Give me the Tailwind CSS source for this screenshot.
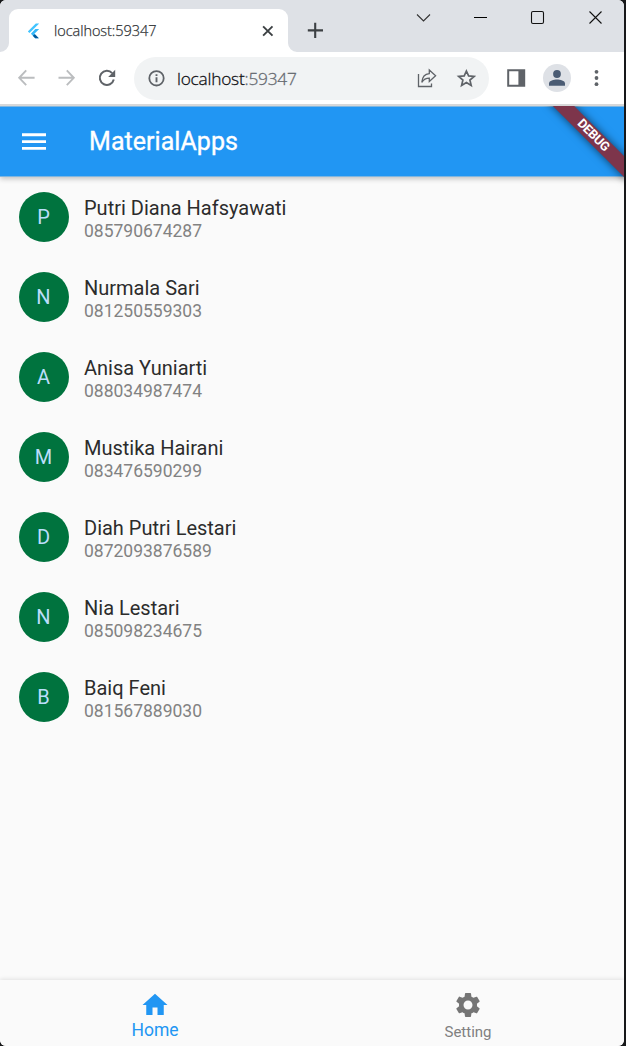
<!DOCTYPE html>
<html lang="en">
<head>
<meta charset="utf-8">
<title>localhost:59347</title>
<script src="https://cdn.jsdelivr.net/npm/@tailwindcss/browser@4"></script>
</head>
<body class="bg-[#17181a] font-['Roboto',sans-serif]">
<div class="flex h-[1046px] w-[624px] flex-col overflow-hidden rounded-[6px] bg-[#fafafa]">
  <!-- Tab strip -->
  <div class="flex h-[52px] shrink-0 items-start bg-[#dee1e6]">
    <div class="relative ml-[9px] mt-[9px] flex h-[43px] w-[279px] items-center rounded-t-[9px] bg-white font-['Open_Sans',sans-serif]">
      <svg class="absolute -left-[9px] bottom-0" width="9" height="9"><path d="M9 0A9 9 0 0 1 0 9H9Z" fill="#fff"/></svg>
      <svg class="absolute -right-[9px] bottom-0" width="9" height="9"><path d="M0 0A9 9 0 0 0 9 9H0Z" fill="#fff"/></svg>
      <svg class="ml-[16px]" width="20" height="20" viewBox="0 0 20 20"><path d="M2.8 10.4 10.8 2.4H14.2L4.5 12.1Z" fill="#40c4ff"/><path d="M10.3 8H14.2L9.4 12.8 13.8 17.2H10.2L5.9 12.8Z" fill="#35b8fa"/><path d="M7.8 14.8 9.9 13.2 13.8 17.2H10.2Z" fill="#01579b"/></svg>
      <span class="ml-[9px] w-[200px] text-[14.5px] font-light tracking-[-0.05px] text-[#303336] [-webkit-text-stroke:0.25px]">localhost:59347</span>
      <svg class="ml-[7px]" width="14" height="14" viewBox="0 0 14 14"><path d="M2.1 2.3 11.5 11.7M11.5 2.3 2.1 11.7" stroke="#3c4043" stroke-width="1.9"/></svg>
    </div>
    <svg class="ml-[19px] mt-[22px]" width="16" height="16" viewBox="0 0 16 16"><path d="M8.2 .8V16M.8 8.4H16" stroke="#3c4043" stroke-width="2.1"/></svg>
    <svg class="ml-[92px] mt-[12px]" width="16" height="12" viewBox="0 0 16 12"><path d="M2 2.5 8.5 9 15 2.5" fill="none" stroke="#333" stroke-width="1.1"/></svg>
    <svg class="ml-[43px] mt-[12px]" width="14" height="12"><path d="M0 5.5H13" stroke="#000"/></svg>
    <svg class="ml-[42px] mt-[10px]" width="15" height="15"><rect x="1.5" y="1.5" width="12" height="12" rx="1.5" fill="none" stroke="#111" stroke-width="1.1"/></svg>
    <svg class="ml-[43px] mt-[10px]" width="15" height="15"><path d="M1.5 1.5 13.5 13.5M13.5 1.5 1.5 13.5" stroke="#111" stroke-width="1.1"/></svg>
  </div>

  <!-- Toolbar -->
  <div class="flex h-[52px] shrink-0 items-center bg-white">
    <svg class="ml-[17px]" width="20" height="20" viewBox="0 0 20 20"><path d="M17.6 9.8H2.4M9.2 2.4 2.2 9.8 9.2 17.2" fill="none" stroke="#bbbdbf" stroke-width="1.9"/></svg>
    <svg class="ml-[20px]" width="20" height="20" viewBox="0 0 20 20"><path d="M1.5 9.8H16.6M9.8 2.4 16.8 9.8 9.8 17.2" fill="none" stroke="#bbbdbf" stroke-width="1.9"/></svg>
    <svg class="ml-[20px]" width="20" height="20" viewBox="0 0 20 20"><path d="M16.8 11.6A7.1 7.1 0 1 1 15.2 5.1" fill="none" stroke="#5f6368" stroke-width="2"/><path d="M18.2 1.8V9H11.2Z" fill="#5f6368"/></svg>
    <div class="ml-[17px] flex h-[43px] w-[355px] items-center rounded-full bg-[#f1f3f4] font-['Open_Sans',sans-serif]">
      <svg class="ml-[14px]" width="18" height="18" viewBox="0 0 18 18"><circle cx="8.5" cy="9.3" r="7.2" fill="none" stroke="#5f6368" stroke-width="1.8"/><path d="M8.5 8.3V13.2M8.5 5.2V7" stroke="#5f6368" stroke-width="1.9"/></svg>
      <span class="ml-[11px] mt-[1px] w-[239px] text-[17.3px] font-light tracking-[-0.22px] text-[#111216] [-webkit-text-stroke:0.3px]">localhost<span class="text-[#666a70]">:59347</span></span>
      <svg width="22" height="22" viewBox="0 0 22 22" fill="none" stroke="#5f6368" stroke-width="1.3"><path d="M2.5 7V19.5H15.5V16.5"/><path d="M13.3 3V6.6C8.4 7 6.2 10.5 5.8 15.3 7.6 12.4 9.8 11.2 13.3 11.2V14.6L19.6 8.8Z"/></svg>
      <svg class="ml-[18px]" width="20" height="20" viewBox="0 0 20 20"><path d="M10.4 3 12.6 7.9 18.1 8.4 13.9 12 15.2 17.4 10.4 14.5 5.6 17.4 6.9 12 2.7 8.4 8.2 7.9Z" fill="none" stroke="#5f6368" stroke-width="1.7"/></svg>
    </div>
    <svg class="ml-[18px]" width="19" height="18"><path d="M1.2 1.2H17.2V16.8H1.2Z" fill="#fff" stroke="#5f6368" stroke-width="2"/><path d="M11.4 1H17.8V17H11.4Z" fill="#5f6368"/></svg>
    <svg class="ml-[17px]" width="28" height="28" viewBox="0 0 28 28"><circle cx="14" cy="14" r="14" fill="#dee1e6"/><circle cx="14" cy="10" r="3.9" fill="#4b5c74"/><path d="M6 21.7V19.4C6 16.8 11 15.6 14 15.6S22 16.8 22 19.4V21.7Z" fill="#4b5c74"/></svg>
    <svg class="ml-[23px]" width="6" height="20" fill="#5f6368"><circle cx="2.5" cy="3.8" r="1.9"/><circle cx="2.5" cy="10" r="1.9"/><circle cx="2.5" cy="16.2" r="1.9"/></svg>
  </div>
  <div class="h-[2px] shrink-0 bg-[#d7d8d9]"></div>

  <!-- App -->
  <div class="relative flex grow flex-col overflow-hidden">
    <header class="flex h-[71px] shrink-0 items-center border-y border-[#7fb6e0] bg-[#2196f3] shadow-[0_2px_5px_rgba(0,0,0,0.22)]">
      <svg class="ml-[18px]" width="32" height="32" viewBox="0 0 24 24" fill="#fff"><path d="M3 17.9h18v-2.2H3v2.2zm0-5.1h18v-2.2H3v2.2zm0-7.3v2.2h18V5.5H3z"/></svg>
      <h1 class="ml-[39px] text-[25px] leading-[30px] tracking-[0.05px] text-white [-webkit-text-stroke:0.35px]">MaterialApps</h1>
    </header>
    <div class="absolute left-[537px] top-[22px] flex h-[15px] w-[112px] rotate-45 items-center justify-center bg-[#7d354b] text-[12.75px] font-bold leading-none tracking-[-0.3px] text-white shadow-[0_0_8px_rgba(0,0,0,0.6)]">DEBUG</div>

    <main class="flex grow flex-col gap-[30px] pl-[19px] pt-[14.5px]">
      <div class="flex h-[50px] items-center"><div class="flex size-[50px] items-center justify-center rounded-full bg-[#00733e] pr-px text-[20px] text-[#bbdefb]">P</div><div class="ml-[15px] pt-[5px]"><p class="text-[20px] leading-[24px] text-[#2c2c2c]">Putri Diana Hafsyawati</p><p class="text-[17.5px] leading-[22px] text-[#828282]">085790674287</p></div></div>
      <div class="flex h-[50px] items-center"><div class="flex size-[50px] items-center justify-center rounded-full bg-[#00733e] pr-px text-[20px] text-[#bbdefb]">N</div><div class="ml-[15px] pt-[5px]"><p class="text-[20px] leading-[24px] text-[#2c2c2c]">Nurmala Sari</p><p class="text-[17.5px] leading-[22px] text-[#828282]">081250559303</p></div></div>
      <div class="flex h-[50px] items-center"><div class="flex size-[50px] items-center justify-center rounded-full bg-[#00733e] pr-px text-[20px] text-[#bbdefb]">A</div><div class="ml-[15px] pt-[5px]"><p class="text-[20px] leading-[24px] text-[#2c2c2c]">Anisa Yuniarti</p><p class="text-[17.5px] leading-[22px] text-[#828282]">088034987474</p></div></div>
      <div class="flex h-[50px] items-center"><div class="flex size-[50px] items-center justify-center rounded-full bg-[#00733e] pr-px text-[20px] text-[#bbdefb]">M</div><div class="ml-[15px] pt-[5px]"><p class="text-[20px] leading-[24px] text-[#2c2c2c]">Mustika Hairani</p><p class="text-[17.5px] leading-[22px] text-[#828282]">083476590299</p></div></div>
      <div class="flex h-[50px] items-center"><div class="flex size-[50px] items-center justify-center rounded-full bg-[#00733e] pr-px text-[20px] text-[#bbdefb]">D</div><div class="ml-[15px] pt-[5px]"><p class="text-[20px] leading-[24px] text-[#2c2c2c]">Diah Putri Lestari</p><p class="text-[17.5px] leading-[22px] text-[#828282]">0872093876589</p></div></div>
      <div class="flex h-[50px] items-center"><div class="flex size-[50px] items-center justify-center rounded-full bg-[#00733e] pr-px text-[20px] text-[#bbdefb]">N</div><div class="ml-[15px] pt-[5px]"><p class="text-[20px] leading-[24px] text-[#2c2c2c]">Nia Lestari</p><p class="text-[17.5px] leading-[22px] text-[#828282]">085098234675</p></div></div>
      <div class="flex h-[50px] items-center"><div class="flex size-[50px] items-center justify-center rounded-full bg-[#00733e] pr-px text-[20px] text-[#bbdefb]">B</div><div class="ml-[15px] pt-[5px]"><p class="text-[20px] leading-[24px] text-[#2c2c2c]">Baiq Feni</p><p class="text-[17.5px] leading-[22px] text-[#828282]">081567889030</p></div></div>
    </main>

    <nav class="grid h-[66px] shrink-0 grid-cols-2 bg-[#fafafa] shadow-[0_-1px_4px_rgba(0,0,0,0.1)]">
      <div class="flex flex-col items-center pt-[10px] pr-[2px] text-[#2196f3]">
        <svg width="30" height="30" viewBox="0 0 24 24" fill="currentColor"><path d="M10 20v-6h4v6h5v-8h3L12 3 2 12h3v8z"/></svg>
        <span class="text-[17.5px] leading-[20px]">Home</span>
      </div>
      <div class="flex flex-col items-center pt-[10px] text-[#757575]">
        <svg width="30" height="30" viewBox="0 0 24 24" fill="currentColor"><path d="M19.14 12.94c.04-.3.06-.61.06-.94 0-.32-.02-.64-.07-.94l2.03-1.58c.18-.14.23-.41.12-.61l-1.92-3.32c-.12-.22-.37-.29-.59-.22l-2.39.96c-.5-.38-1.03-.7-1.62-.94l-.36-2.54c-.04-.24-.24-.41-.48-.41h-3.84c-.24 0-.43.17-.47.41l-.36 2.54c-.59.24-1.13.57-1.62.94l-2.39-.96c-.22-.08-.47 0-.59.22L2.74 8.87c-.12.21-.08.47.12.61l2.03 1.58c-.05.3-.09.63-.09.94s.02.64.07.94l-2.03 1.58c-.18.14-.23.41-.12.61l1.92 3.32c.12.22.37.29.59.22l2.39-.96c.5.38 1.03.7 1.62.94l.36 2.54c.05.24.24.41.48.41h3.84c.24 0 .44-.17.47-.41l.36-2.54c.59-.24 1.13-.56 1.62-.94l2.39.96c.22.08.47 0 .59-.22l1.92-3.32c.12-.22.07-.47-.12-.61l-2.01-1.58zM12 15.6c-1.98 0-3.6-1.62-3.6-3.6s1.62-3.6 3.6-3.6 3.6 1.62 3.6 3.6-1.62 3.6-3.6 3.6z"/></svg>
        <span class="mt-[2px] text-[15px] leading-[20px] text-[#808080]">Setting</span>
      </div>
    </nav>
  </div>
</div>
</body>
</html>
